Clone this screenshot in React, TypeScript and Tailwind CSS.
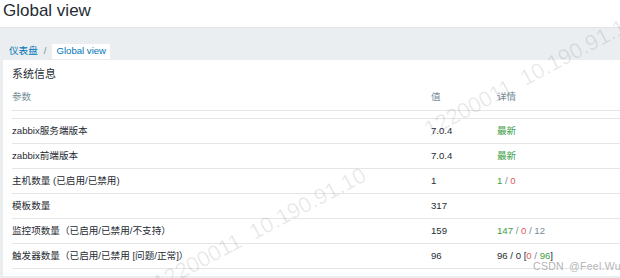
import React from 'react';

type Part = { t: string; c?: string };

const GREEN = 'text-[#429e47]';
const RED = 'text-[#e45959]';
const GRAY = 'text-[#768d99]';

const rows: { name: string; value: string; detail: Part[] }[] = [
  { name: 'zabbix服务端版本', value: '7.0.4', detail: [{ t: '最新', c: GREEN }] },
  { name: 'zabbix前端版本', value: '7.0.4', detail: [{ t: '最新', c: GREEN }] },
  {
    name: '主机数量 (已启用/已禁用)',
    value: '1',
    detail: [
      { t: '1', c: GREEN },
      { t: ' / ', c: GRAY },
      { t: '0', c: RED },
    ],
  },
  { name: '模板数量', value: '317', detail: [] },
  {
    name: '监控项数量（已启用/已禁用/不支持）',
    value: '159',
    detail: [
      { t: '147', c: GREEN },
      { t: ' / ', c: GRAY },
      { t: '0', c: RED },
      { t: ' / 12', c: GRAY },
    ],
  },
  {
    name: '触发器数量（已启用/已禁用 [问题/正常]）',
    value: '96',
    detail: [
      { t: '96 / 0 [' },
      { t: '0', c: RED },
      { t: ' / ', c: GRAY },
      { t: '96', c: GREEN },
      { t: ']' },
    ],
  },
];

// 워터마크 (반투명 회전 텍스트)
function Watermark({ className }: { className: string }) {
  return (
    <div
      className={`pointer-events-none absolute origin-left -rotate-[28deg] whitespace-nowrap text-[22px] text-black/[0.09] ${className}`}
    >
      12200011&nbsp;&nbsp;10.190.91.10
    </div>
  );
}

export default function App() {
  return (
    <div
      className="relative h-[278px] w-[620px] overflow-hidden bg-[#ebeef0] text-[9.6px] text-[#1f2c33]"
      style={{ fontFamily: '"Liberation Sans", Arial, "Noto Sans CJK SC", sans-serif' }}
    >
      <header className="h-[28px] border-b border-[#dfe4e7] bg-white pl-[3px]">
        <h1 className="text-[17px] leading-[21px]">Global view</h1>
      </header>

      <nav className="flex h-[31px] items-end pl-[9px]">
        <div className="flex h-[15px] items-center">
          <span className="text-[#0275b8]">仪表盘</span>
          <span className="mx-[6px] text-[#768d99]">/</span>
          <span className="flex h-[15px] items-center bg-white px-[4px] text-[#0275b8]">Global view</span>
        </div>
      </nav>

      <section className="ml-[3px] mt-[1px] bg-white pl-[9px]">
        <div className="flex h-[25px] items-end pb-[3px] text-[11px]">系统信息</div>
        <div className="grid h-[26px] grid-cols-[419px_66px_1fr] items-center border-b border-[#e3e6e8] text-[#768d99]">
          <span>参数</span>
          <span>值</span>
          <span>详情</span>
        </div>
        <div className="h-[8px] border-b border-[#e3e6e8]" />
        {rows.map((r) => (
          <div
            key={r.name}
            className="grid h-[25px] grid-cols-[419px_66px_1fr] items-center border-b border-[#e3e6e8]"
          >
            <span>{r.name}</span>
            <span>{r.value}</span>
            <span className="whitespace-pre">
              {r.detail.map((p, i) => (
                <span key={i} className={p.c}>
                  {p.t}
                </span>
              ))}
            </span>
          </div>
        ))}
        <div className="h-[7px]" />
      </section>

      <Watermark className="left-[155px] top-[268px]" />
      <Watermark className="left-[426px] top-[114px]" />

      <div className="pointer-events-none absolute left-[533px] top-[259px] flex gap-[5px] whitespace-nowrap text-[10.5px] tracking-[0.3px] text-[#b5b5b5] [text-shadow:0_0_2px_#fff]">
        <span>CSDN</span>
        <span>@Feel.Wu</span>
      </div>
    </div>
  );
}
